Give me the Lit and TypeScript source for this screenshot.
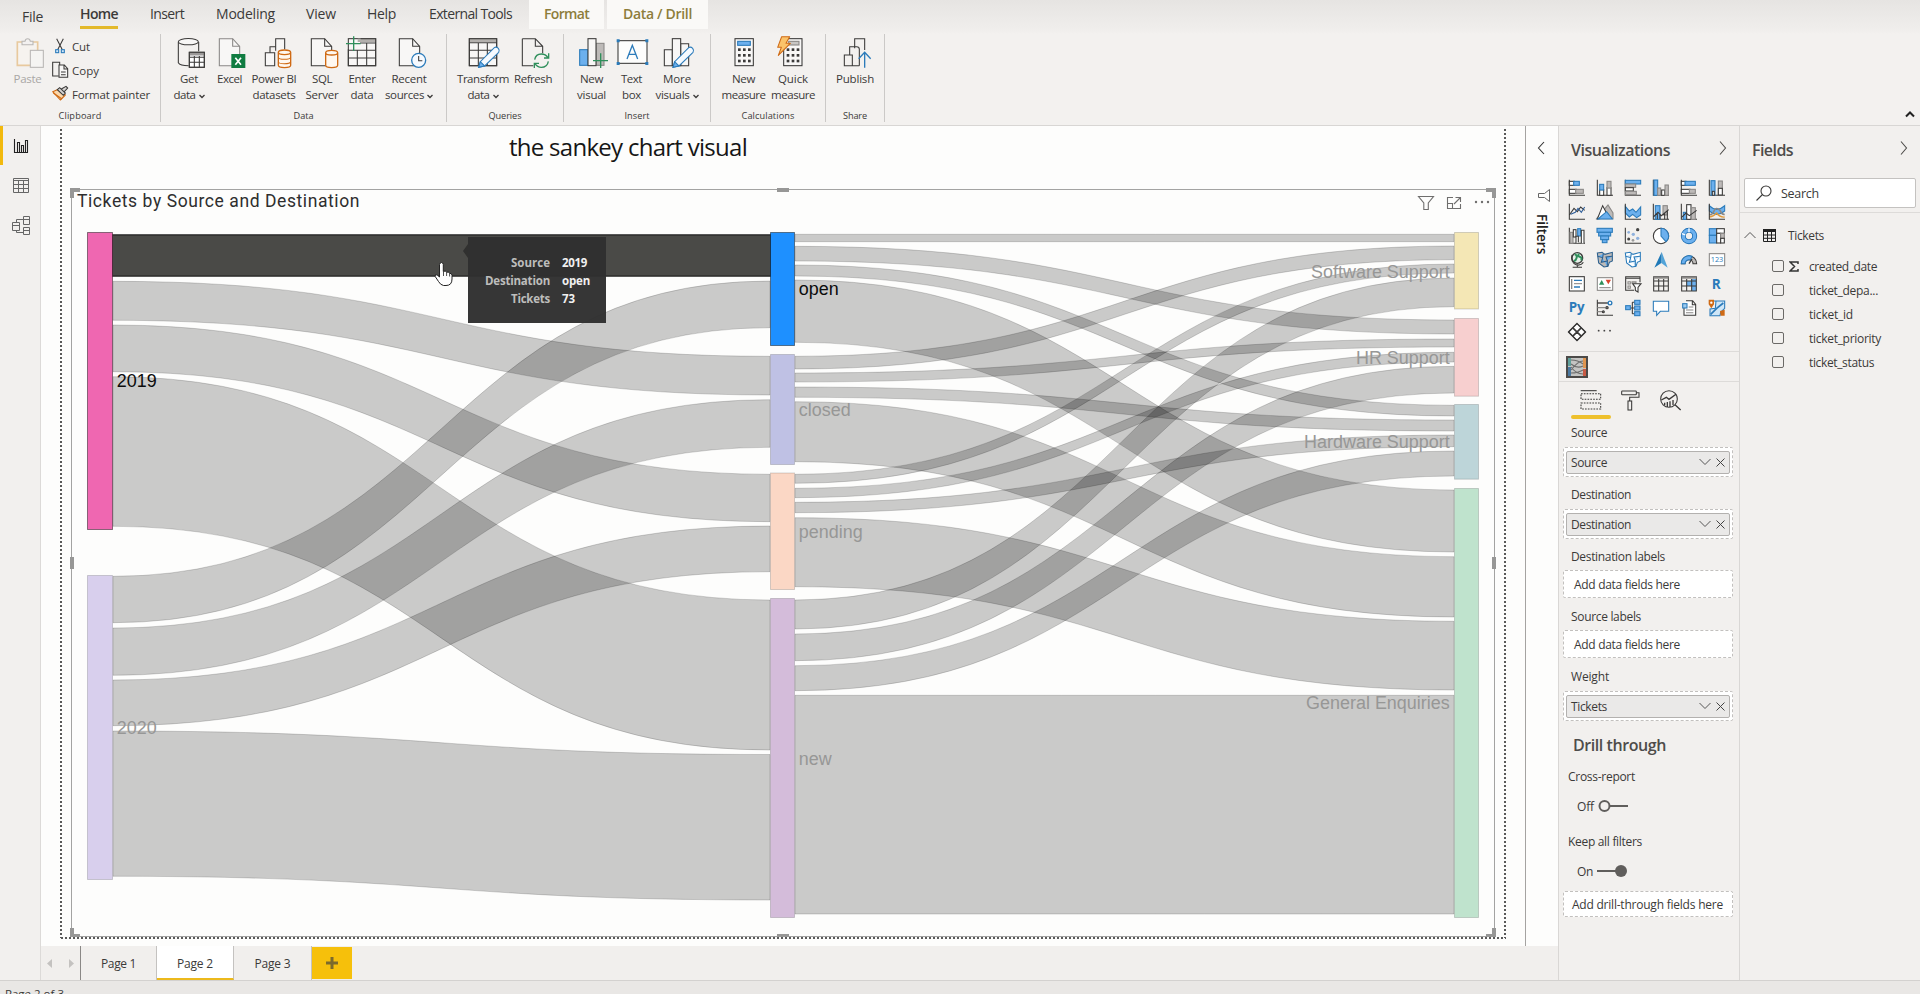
import { LitElement, html, css, svg, nothing } from "lit";
import { customElement, property, query } from "lit/decorators.js";
import { classMap } from "lit/directives/class-map.js";

const INK = "#3b3a39";
const GREY = "#8a8886";
const BLUE = "#2b7bba";
const SKY = "#6cb0ee";
const ORANGE = "#cf6a14";
const GREEN = "#2f8f5b";

/** Single line of text whose tracking is adjusted to span a given width. */
@customElement("fit-text")
class FitText extends LitElement {
  static styles = css`
    :host { display: inline-block; white-space: nowrap; }
    .t { display: inline-block; }
  `;
  @property() text = "";
  @property({ type: Number }) w = 0;
  @query(".t") span!: HTMLSpanElement;
  firstUpdated() {
    if (!this.w) return;
    const natural = this.span.getBoundingClientRect().width;
    const step = (this.w - natural) / Math.max(1, this.text.length);
    this.span.style.letterSpacing = step.toFixed(3) + "px";
  }
  render() { return html`<span class="t">${this.text}</span>`; }
}
const fit = (text: string, w: number) => html`<fit-text text=${text} w=${w}></fit-text>`;

/** Icon drawn on a grid of thirds of a pixel. */
const icon = (x: number, y: number, w: number, h: number, body: unknown) => html`<svg
  width=${w / 3} height=${h / 3} viewBox="${x} ${y} ${w} ${h}" fill="none" stroke=${INK} stroke-width="3.2" overflow="visible">${body}</svg>`;

const chevron = (dir: string, color = "#4e4c4a") => {
  const d: Record<string, string> = { r: "M4 1.500l5.500 6.500-5.500 6.500", l: "M10 2L4.500 8l5.500 6" };
  return html`<svg width="14" height="16" viewBox="0 0 14 16" fill="none" stroke=${color} stroke-width="1.1"><path d=${d[dir]} /></svg>`;
};

/* ---------- ribbon ---------- */
const pencil = (x: number, y: number) => svg`<g transform="translate(${x} ${y})">
  <path d="M1 61L6 44L48 2Q54-2 60 4Q65 10 61 16L19 57z" fill="#f5faff" stroke="${BLUE}" /><path d="M1 61L6 44L19 57z" fill="${SKY}" stroke="${BLUE}" /></g>`;
const doc = (x: number, stroke = INK) => svg`<path d="M${x} 116H${x + 40}L${x + 61} 139V197H${x}z" fill="#f8f7f6" stroke=${stroke} /><path d="M${x + 40} 116V139H${x + 61}" stroke=${stroke} />`;
const cyl = (x: number, y: number, w: number, h: number) => svg`<path d="M${x} ${y + 7}V${y + h - 7}Q${x} ${y + h} ${x + w / 2} ${y + h}T${x + w} ${y + h - 7}V${y + 7}Q${x + w} ${y} ${x + w / 2} ${y}T${x} ${y + 7}Q${x} ${y + 14} ${x + w / 2} ${y + 14}T${x + w} ${y + 7}" fill="#fff8f0" stroke="${ORANGE}" stroke-width="4" />`;
const calc = (x: number) => svg`<rect x=${x} y="116" width="55" height="81" fill="#f8f7f6" />
  ${[0, 1, 2].map(r => [0, 1, 2].map(c => svg`<rect x=${x + 9 + c * 15} y=${145 + r * 17} width="8" height="8" fill="${INK}" stroke="none" />`))}`;

const RIBBON_ICONS: Record<string, unknown> = {
  paste: icon(30, 108, 108, 96, svg`<g opacity=".55"><path d="M52 126H113V196H52z" stroke="#e0a95c" stroke-width="5" fill="#faf6ef"/><path d="M66 134V124H75Q76 116 83 116T91 124H99V134z" fill="#f3f2f1" stroke="${GREY}"/><rect x="91" y="151" width="39" height="51" fill="#f8f7f6" stroke="${GREY}"/></g>`),
  get: icon(513, 108, 108, 96, svg`<path d="M535 126V188Q540 197 566 197M596 126V154" /><ellipse cx="565" cy="125" rx="30" ry="9.500" fill="#f8f7f6" /><rect x="568" y="157" width="45" height="45" fill="#fff"/><path d="M568 162H613" stroke-width="9" stroke="#9b9998"/><path d="M568 157H613V202H568zM568 172H613M568 187H613M583 168V202M598 168V202" />`),
  excel: icon(635, 108, 108, 96, svg`${doc(657, GREY)}<rect x="693" y="162" width="42" height="42" fill="#107c41" stroke="none"/><path d="M705 173L722 194M722 173L705 194" stroke="#fff" stroke-width="5"/>`),
  pbi: icon(768, 108, 108, 96, svg`<path d="M827 152V116H854V148M796 158H824V197H796z" fill="#f8f7f6"/><path d="M810 158V140H827" />${cyl(835, 150, 37, 53)}<path d="M835 172Q836 178 853 178T872 172M835 186Q836 191 853 191T872 186" stroke="${ORANGE}" />`),
  sql: icon(912, 108, 108, 96, svg`${doc(934)}${cyl(977, 151, 36, 52)}`),
  enter: icon(1032, 108, 108, 96, svg`<rect x="1045" y="116" width="82" height="81" fill="#f8f7f6"/><path d="M1073 121H1127" stroke-width="10" stroke="#b3b0ad"/><path d="M1045 148V197H1127V116H1082M1045 151H1127M1045 174H1127M1072 150V197M1100 128V197M1080 129H1127" /><path d="M1038 131H1082M1061 109V153" stroke="${GREEN}" stroke-width="4"/>`),
  recent: icon(1173, 108, 108, 96, svg`${doc(1198)}<circle cx="1256" cy="181" r="21" fill="#f6faff" stroke="${BLUE}" stroke-width="4"/><path d="M1256 168V182H1267" />`),
  transform: icon(75, 108, 108, 96, svg`<rect x="88" y="116" width="82" height="81" fill="#f8f7f6"/><path d="M88 121H170" stroke-width="10" stroke="#b3b0ad"/><path d="M88 116H170V197H88zM88 128H170M88 151H170M88 174H170M115 128V197M142 128V197" />${pencil(115, 141)}`),
  refresh: icon(225, 108, 108, 96, svg`<path d="M247 116H286L308 139V160M247 116V197H280M286 116V139H308" /><g stroke="${GREEN}" stroke-width="4"><path d="M284 179Q287 162 304 162Q317 162 324 173M326 160V174H312M325 184Q322 202 304 202Q292 202 285 191M283 204V190H297"/></g>`),
  newvisual: icon(401, 108, 108, 96, svg`<rect x="418" y="149" width="25" height="47" fill="${SKY}" stroke="${BLUE}"/><rect x="467" y="130" width="24" height="66" fill="#bdbab8" stroke="${GREY}"/><rect x="443" y="116" width="24" height="81" fill="#f8f7f6"/><path d="M458 182H503M481 160V204" stroke="${GREEN}" stroke-width="4"/>`),
  textbox: icon(521, 108, 108, 96, svg`<rect x="533" y="122" width="87" height="68" fill="#fdfdfc"/><path d="M529 118h9v9h-9zM615 118h9v9h-9zM529 186h9v9h-9zM615 186h9v9h-9z" fill="${BLUE}" stroke="none"/><path d="M560 177L576 136L592 177M566 163H586" stroke="${BLUE}" stroke-width="4"/>`),
  more: icon(657, 108, 108, 96, svg`<path d="M673 149H697V197H673zM722 131H746V197H722z" fill="#f8f7f6"/><rect x="697" y="116" width="25" height="81" fill="#f8f7f6"/>${pencil(698, 141)}`),
  measure: icon(856, 108, 108, 96, svg`${calc(883)}<rect x="891" y="124" width="38" height="12" fill="${SKY}" stroke="${BLUE}"/>`),
  quick: icon(1004, 108, 108, 96, svg`${calc(1030)}<rect x="1045" y="124" width="31" height="11" fill="#c8c6c4" stroke="${GREY}"/><path d="M1024 110H1048L1037 130H1050L1014 166L1023 142H1012z" fill="#fbc36a" stroke="${ORANGE}" stroke-linejoin="round"/>`),
  publish: icon(1191, 108, 108, 96, svg`<path d="M1244 145V116H1274V150M1229 165V140H1250Q1258 140 1258 148V197M1213 165H1237V197H1213zM1237 197H1258"/><path d="M1274 203V157M1256 176L1274 157L1292 176" stroke="${BLUE}" stroke-width="4"/>`),
  cut: icon(156, 112, 48, 54, svg`<path d="M170 117L187 150M190 117L173 150"/><rect x="167" y="150" width="9" height="9" stroke="${BLUE}" fill="#cfe6fb"/><rect x="184" y="150" width="9" height="9" stroke="${BLUE}" fill="#cfe6fb"/>`),
  copy: icon(156, 184, 48, 54, svg`<path d="M176 229H158V188H179V196"/><path d="M177 196H193L203 207V233H177zM192 196V208H203M183 217H197M183 225H197" fill="#f8f7f6"/>`),
  painter: icon(156, 256, 48, 54, svg`<path d="M158 276L177 268L196 286L181 301z" fill="#fbd8ac" stroke="${ORANGE}" stroke-linejoin="round"/><path d="M160 280L186 298" stroke="${ORANGE}"/><path d="M172 270L179 264L196 280L190 287zM184 268L198 260L203 265L193 276" fill="#d6d4d2"/>`),
};

type Line = [string, number];
interface Btn { id: string; w: number; lines: Line[]; drop?: boolean }
interface Group { w: number; pad: number; label: Line; btns: Btn[] }
const GROUPS: Group[] = [
  { w: 286, pad: 4, label: ["Data", 20], btns: [
    { id: "get", w: 48, lines: [["Get", 18], ["data", 22]], drop: true },
    { id: "excel", w: 33, lines: [["Excel", 25]] },
    { id: "pbi", w: 56, lines: [["Power BI", 45], ["datasets", 43]] },
    { id: "sql", w: 40, lines: [["SQL", 20], ["Server", 33]] },
    { id: "enter", w: 40, lines: [["Enter", 27], ["data", 23]] },
    { id: "recent", w: 54, lines: [["Recent", 35], ["sources", 39]], drop: true }] },
  { w: 117, pad: 9, label: ["Queries", 33], btns: [
    { id: "transform", w: 54, lines: [["Transform", 52], ["data", 22]], drop: true },
    { id: "refresh", w: 46, lines: [["Refresh", 38]] }] },
  { w: 147, pad: 6, label: ["Insert", 25], btns: [
    { id: "newvisual", w: 43, lines: [["New", 23], ["visual", 29]] },
    { id: "textbox", w: 37, lines: [["Text", 21], ["box", 19]] },
    { id: "more", w: 54, lines: [["More", 28], ["visuals", 34]], drop: true }] },
  { w: 115, pad: 8, label: ["Calculations", 53], btns: [
    { id: "measure", w: 49, lines: [["New", 23], ["measure", 44]] },
    { id: "quick", w: 50, lines: [["Quick", 30], ["measure", 44]] }] },
  { w: 59, pad: 5, label: ["Share", 24], btns: [{ id: "publish", w: 48, lines: [["Publish", 38]] }] },
];

@customElement("ribbon-bar")
class RibbonBar extends LitElement {
  static styles = css`
    :host { display: block; position: relative; height: 126px; background: linear-gradient(#e6e4e2 0, #f0eeec 30px, #f3f1ef 34px); border-bottom: 1px solid #d8d6d4; box-sizing: border-box; color: #3b3a39; }
    .tabs { display: flex; height: 29px; font-size: 14px; line-height: 28px; }
    .tab { box-sizing: border-box; position: relative; }
    .tab.file { padding-top: 3px; }
    .tab.home { font-weight: 600; border-bottom: 3px solid #e3b92b; height: 29px; }
    .tab.ctx { background: #faf9f7; color: #8d7d3b; font-weight: 600; text-align: center; }
    .groups { display: flex; padding-top: 5px; height: 88px; }
    .group { box-sizing: border-box; border-right: 1px solid #cbc9c7; display: flex; flex-direction: column; }
    .row { display: flex; height: 79px; }
    .btn { display: flex; flex-direction: column; align-items: center; padding-top: 2px; box-sizing: border-box; font-size: 11.5px; line-height: 16px; }
    .btn svg { display: block; margin-bottom: 3px; flex: none; }
    .dim { color: #a9a7a5; }
    .ln { display: flex; align-items: center; height: 16px; }
    .ln svg { margin: 2px 0 0 3px; }
    .label { font-size: 9.2px; line-height: 12px; text-align: center; height: 12px; margin-top: -1px; padding-top: 2px; }
    .small { display: flex; flex-direction: column; padding-left: 2px; font-size: 11.5px; }
    .srow { display: flex; align-items: center; height: 24px; gap: 4px; }
    .fold { position: absolute; right: 5px; top: 110px; }
  `;
  tab(text: string, w: number, lead: number, cls = "") {
    return html`<div class="tab ${cls}" style="margin-left:${lead}px">${fit(text, w)}</div>`;
  }
  button(b: Btn) {
    return html`<div class="btn" style="width:${b.w}px">${RIBBON_ICONS[b.id]}
      ${b.lines.map((l, i) => html`<div class="ln">${fit(l[0], l[1])}${b.drop && i ? html`<svg width="6" height="5" viewBox="0 0 6 5" fill="none" stroke="#3b3a39" stroke-width="1.300"><path d="M.5 1L3 3.500L5.500 1"/></svg>` : nothing}</div>`)}</div>`;
  }
  render() {
    return html`
      <div class="tabs">
        ${this.tab("File", 21, 22, "file")}${this.tab("Home", 38, 37, "home")}${this.tab("Insert", 34, 32)}
        ${this.tab("Modeling", 59, 32)}${this.tab("View", 30, 31)}${this.tab("Help", 29, 31)}${this.tab("External Tools", 83, 33)}
        <div class="tab ctx" style="width:75px;margin-left:17px">${fit("Format", 45)}</div>
        <div class="tab ctx" style="width:101px;margin-left:3px">${fit("Data / Drill", 69)}</div>
      </div>
      <div class="groups">
        <div class="group" style="width:161px">
          <div class="row">
            <div class="btn dim" style="width:45px;margin-left:5px">${RIBBON_ICONS.paste}<div class="ln">${fit("Paste", 28)}</div></div>
            <div class="small">
              <div class="srow">${RIBBON_ICONS.cut}${fit("Cut", 18)}</div>
              <div class="srow">${RIBBON_ICONS.copy}${fit("Copy", 27)}</div>
              <div class="srow">${RIBBON_ICONS.painter}${fit("Format painter", 78)}</div>
            </div>
          </div>
          <div class="label">${fit("Clipboard", 43)}</div>
        </div>
        ${GROUPS.map(g => html`<div class="group" style="width:${g.w}px">
          <div class="row" style="padding-left:${g.pad}px">${g.btns.map(b => this.button(b))}</div>
          <div class="label">${fit(...g.label)}</div></div>`)}
      </div>
      <svg class="fold" width="10" height="8" viewBox="0 0 10 8" fill="none" stroke="#222" stroke-width="2"><path d="M1 6.500L5 2.500L9 6.500"/></svg>`;
  }
}

/* ---------- sankey ---------- */
interface Node { name: string; x: number; w: number; y0: number; y1: number; fill: string; ly: number; on?: boolean; end?: boolean }
const NODES: Node[] = [
  { name: "2019", x: 87, w: 26, y0: 232, y1: 530, fill: "#ef67b1", ly: 387, on: true },
  { name: "2020", x: 87, w: 26, y0: 575, y1: 880, fill: "#d8cfed", ly: 733.5 },
  { name: "open", x: 770, w: 25, y0: 232, y1: 346, fill: "#1e90ff", ly: 295, on: true },
  { name: "closed", x: 770, w: 25, y0: 354, y1: 465, fill: "#bfc1e4", ly: 416 },
  { name: "pending", x: 770, w: 25, y0: 472.5, y1: 590, fill: "#fbd7c5", ly: 538 },
  { name: "new", x: 770, w: 25, y0: 598, y1: 918, fill: "#d4bcda", ly: 764.7 },
  { name: "Software Support", x: 1454, w: 25, y0: 232, y1: 309.5, fill: "#f4e7b5", ly: 278, end: true },
  { name: "HR Support", x: 1454, w: 25, y0: 318, y1: 396.7, fill: "#f7cfcf", ly: 363.7, end: true },
  { name: "Hardware Support", x: 1454, w: 25, y0: 404, y1: 479.7, fill: "#bdd5d9", ly: 447.7, end: true },
  { name: "General Enquiries", x: 1454, w: 25, y0: 488, y1: 918, fill: "#bfe3cd", ly: 709, end: true },
];
/* top and bottom at the source, then top and bottom at the destination */
const LEFT_LINKS = [
  [281.3, 320.3, 356.3, 395], [325, 371.7, 474.3, 521.7], [376.7, 526.3, 600, 750],
  [576.3, 622.7, 281, 327.7], [628, 675.3, 399.7, 447.3], [680, 725.7, 526, 571.7], [731, 876.3, 754.5, 900],
];
const RIGHT_LINKS = [
  [234.3, 241.7, 234.3, 241.7], [246.3, 261, 320, 334], [265, 276, 405.3, 416], [280, 342.3, 490, 552],
  [356.3, 369, 246, 259.7], [373, 382, 339, 347], [387, 397.3, 420, 431], [401.7, 461.7, 556.7, 617],
  [474.3, 483.3, 264, 273], [488.3, 497.7, 352.3, 362], [502.3, 512.7, 435, 446.7], [517.7, 586.7, 621.3, 690],
  [600, 629, 278, 306.7], [634, 660.7, 366.3, 393], [665.7, 690.7, 451, 476], [695.3, 914, 695.3, 914],
];
const ribbonPath = (x0: number, x1: number, [a, b, c, d]: number[]) => {
  const m = (x0 + x1) / 2;
  return `M${x0} ${a}C${m} ${a} ${m} ${c} ${x1} ${c}V${d}C${m} ${d} ${m} ${b} ${x0} ${b}z`;
};

@customElement("report-canvas")
class ReportCanvas extends LitElement {
  static styles = css`
    :host { display: block; position: relative; background: #fdfdfc; overflow: hidden; }
    .plot { position: absolute; inset: 0; }
    .heading { padding: 7px 0 0 468px; font-size: 24px; line-height: 28px; color: #161616; font-weight: 400; }
    .title { padding: 28px 0 0 36px; font-family: Roboto, sans-serif; font-size: 17.5px; line-height: 24px; color: #2e2e2e; }
    .link { fill: #000; fill-opacity: .2; stroke: #000; stroke-opacity: .16; stroke-width: 1; }
    .hot { fill: #4a4a47; stroke: #2f2f2e; stroke-width: 1.6; }
    .name { font: 17.95px "Liberation Sans", Arial, sans-serif; fill: #979796; }
    .name.on { fill: #0c0c0c; }
    .end { text-anchor: end; }
    .tip { position: absolute; left: 427px; top: 111px; width: 138px; height: 86px; box-sizing: border-box; background: rgba(48, 48, 47, .97); display: grid; grid-template-columns: 82px 1fr; column-gap: 12px; grid-auto-rows: 18px; padding-top: 17px; line-height: 18px; font-size: 11.5px; font-weight: 700; color: #f0f0f0; }
    .k { text-align: right; color: #bdbdbc; }
    .arrow { position: absolute; left: -5px; top: 7px; border: solid transparent; border-width: 7px 5px 7px 0; border-right-color: #30302f; }
  `;
  node(n: Node) {
    return svg`<rect x=${n.x + .5} y=${n.y0 + .5} width=${n.w - 1} height=${n.y1 - n.y0 - 1} fill=${n.fill} stroke="#000" stroke-opacity=${n.on ? .45 : .16} />`;
  }
  render() {
    return html`
      <svg class="plot" width="1484" height="820" viewBox="41 126 1484 820">
        <g stroke="#595959" stroke-width="2" stroke-dasharray="2 2" fill="none"><path d="M61 129V938M61 938H1506M1505 129V938"/></g>
        <rect x="71.500" y="189.500" width="1423" height="747" fill="none" stroke="#a3a3a2"/>
        <g fill="#979796"><path d="M70 188h10v4h-6v6h-4zM1486 188h10v10h-4v-6h-6zM70 928h4v6h6v3h-10zM1492 928h4v9h-10v-3h6z"/>
          <path d="M777 188h12v4h-12zM777 934h12v3h-12zM70 557h4v12h-4zM1492 557h4v12h-4z"/></g>
        ${LEFT_LINKS.map(l => svg`<path class="link" d=${ribbonPath(113, 770, l)} />`)}
        ${RIGHT_LINKS.map(l => svg`<path class="link" d=${ribbonPath(795, 1454, l)} />`)}
        <rect class="hot" x="112" y="235" width="659" height="41"/>
        ${NODES.map(n => this.node(n))}
        ${NODES.map(n => svg`<text class=${classMap({ name: true, on: !!n.on, end: !!n.end })} x=${n.end ? 1449.7 : n.x + n.w + 3.8} y=${n.ly}>${n.name}</text>`)}
        <g fill="none" stroke="#6f6e6d" stroke-width="1.100">
          <path d="M1418.500 196.500H1433.500L1428.300 203V209.500H1423.800V203z"/>
          <path d="M1453 197.500H1447.500V208.500H1460.500V204M1447.500 203.500H1452.500V208.500M1455.500 197.500H1460.500V202M1460.500 197.500L1454 204"/></g>
        <g fill="#6f6e6d"><circle cx="1476" cy="202" r="1.200"/><circle cx="1482" cy="202" r="1.200"/><circle cx="1488" cy="202" r="1.200"/></g>
        <path d="M439.500 264.500Q440 262.500 441.500 262.500T443.300 264.500V271.500Q445.500 270.200 446.600 272.300Q449 271.300 449.600 273.400Q452 272.800 452 275.500V279Q452 285.500 446 285.500H443.500Q440.500 285 438.500 281.500L435.200 276.500Q434.600 274.300 437 274.800L439.500 277z" fill="#fff" stroke="#222" stroke-width="1"/>
        <path d="M443.500 272v4M446.600 272.500v3.500M449.600 273.500v3" stroke="#222" stroke-width=".8"/>
      </svg>
      <div class="heading">${fit("the sankey chart visual", 238)}</div>
      <div class="title">${fit("Tickets by Source and Destination", 283)}</div>
      <div class="tip"><div class="arrow"></div>
        <div class="k">${fit("Source", 39)}</div><div>${fit("2019", 25)}</div>
        <div class="k">${fit("Destination", 65)}</div><div>${fit("open", 28)}</div>
        <div class="k">${fit("Tickets", 39)}</div><div>${fit("73", 13)}</div>
      </div>`;
  }
}

/* ---------- visualizations pane ---------- */
const ax = svg`<path d="M4 2V49H51" />`;
const bar = (x: number, y: number, w: number, h: number, f = SKY, s = BLUE) => svg`<rect x=${x} y=${y} width=${w} height=${h} fill=${f} stroke=${s} />`;
const G = "#bdbab8";
const grid = svg`<path d="M5 5H49V48H5zM5 18H49M5 33H49M20 12V48M35 12V48" /><path d="M5 8H49" stroke-width="6" stroke="${GREY}"/>`;
const map = (f1: string, f2: string, s: string) => svg`<path d="M4 6L18 4L27 10L49 4V30L40 34L36 46L24 48L8 36z" fill=${f1} stroke=${s}/><path d="M5 16L20 20L22 8M20 20L16 34L34 30V48M34 30L30 18L48 16" fill=${f2} stroke=${s}/>`;
const VISUALS = [
  svg`${ax}${bar(4, 7, 15, 12, "#fff", INK)}${bar(17, 7, 17, 12)}${bar(4, 31, 21, 12, "#fff", INK)}${bar(23, 31, 23, 12, G, GREY)}`,
  svg`${ax}${bar(11, 32, 12, 17, "#fff", INK)}${bar(11, 16, 12, 17)}${bar(33, 26, 12, 23, "#fff", INK)}${bar(33, 7, 12, 20, G, GREY)}`,
  svg`${ax}${bar(4, 4, 46, 11)}${bar(4, 15, 31, 10, G, GREY)}${bar(4, 26, 24, 10, "#fff", INK)}${bar(4, 37, 33, 10, G, GREY)}`,
  svg`${ax}${bar(6, 3, 11, 46)}${bar(17, 27, 9, 22, G, GREY)}${bar(29, 33, 9, 16, "#fff", INK)}${bar(39, 18, 10, 31, G, GREY)}`,
  svg`${ax}${bar(4, 7, 14, 12, "#fff", INK)}${bar(15, 7, 31, 12)}${bar(4, 31, 26, 12, "#fff", INK)}${bar(28, 31, 18, 12, G, GREY)}`,
  svg`${ax}${bar(9, 5, 12, 44)}${bar(13, 37, 6, 12, "#fff", INK)}${bar(31, 6, 12, 42, G, GREY)}${bar(31, 28, 12, 20, "#fff", INK)}`,
  svg`${ax}<path d="M4 36L18 16L28 26L38 12L50 22" /><path d="M8 34L22 28L30 16L40 28L50 12" stroke="#2f5f9a"/>`,
  svg`<path d="M2 47L36 6L51 30V47z" fill="${G}" stroke="${GREY}"/><path d="M4 48L20 8L38 42z" fill="#fff"/><path d="M6 48L22 34L32 26L49 48z" fill="${SKY}" stroke="${BLUE}"/>`,
  svg`<path d="M4 10L16 24L26 18L36 28L50 12V36L38 44L26 34L16 42L4 30z" fill="${SKY}" stroke="${BLUE}"/>${ax}`,
  svg`${ax}${bar(10, 8, 14, 41)}${bar(33, 8, 13, 28, G, GREY)}<path d="M4 42L18 28L28 38L50 20M16 30V49M24 36V49M38 30V49M46 24V49"/>`,
  svg`${ax}${bar(10, 28, 10, 21)}${bar(20, 5, 13, 44, "#fff", INK)}${bar(34, 14, 12, 35, G, GREY)}<path d="M4 44L18 30L28 38L50 22"/>`,
  svg`<path d="M4 8Q26 30 50 8V24Q26 44 4 24z" fill="${SKY}" stroke="${BLUE}"/><path d="M4 34Q12 38 18 24T36 22Q42 36 50 34" stroke="${GREY}" stroke-width="5"/><path d="M4 42Q18 40 26 30Q36 44 50 42" stroke="#e09a3c" stroke-width="4"/>${ax}`,
  svg`${ax}${bar(6, 16, 9, 33, G, GREY)}${bar(16, 8, 8, 22, "#fff", INK)}${bar(29, 5, 9, 22)}<path d="M24 49V28H31V46M40 49V10H48V49" fill="#fff"/>`,
  svg`${bar(3, 4, 46, 12)}${bar(8, 16, 36, 11)}${bar(14, 27, 24, 11)}${bar(19, 38, 14, 9)}`,
  svg`${ax}<g stroke="none" fill="#444"><circle cx="41" cy="8" r="5"/><circle cx="14" cy="36" r="4.500"/></g><g stroke="none" fill="#8fb1dd"><circle cx="14" cy="16" r="4"/><circle cx="28" cy="22" r="5"/><circle cx="41" cy="34" r="5"/></g><circle cx="27" cy="40" r="4" fill="#999" stroke="none"/>`,
  svg`<circle cx="27" cy="27" r="23" fill="#fff"/><path d="M27 4A23 23 0 0 1 42 44L27 27z" fill="${SKY}" stroke="${BLUE}"/>`,
  svg`<circle cx="27" cy="27" r="17" stroke="#1d6fb5" stroke-width="15"/><circle cx="27" cy="27" r="17" stroke="${SKY}" stroke-width="10"/><path d="M27 4V16M6 20L16 24" stroke="#fff" stroke-width="4"/>`,
  svg`${bar(4, 5, 22, 20)}${bar(4, 25, 22, 23)}${bar(26, 5, 23, 14, "#fff", INK)}${bar(26, 19, 12, 29, "#fff", INK)}${bar(38, 19, 11, 15, G, GREY)}${bar(38, 34, 11, 14, "#fff", INK)}`,
  svg`<circle cx="28" cy="21" r="16" fill="#e9f1ea" stroke-width="4"/><path d="M20 10Q28 12 26 20T18 30M32 8Q30 18 36 18T40 28" stroke="${GREEN}" stroke-width="6"/><path d="M12 12Q6 34 26 42Q40 44 46 34M28 40V49M14 49H42"/>`,
  map(G, SKY, "#2c5f8d"),
  map("#fff", "#d4e9fb", BLUE),
  svg`<path d="M29 3L47 50L28 36z" fill="#52a3d8" stroke="none"/><path d="M29 3L7 50L28 36z" fill="#1f79b8" stroke="none"/>`,
  svg`<path d="M4 38A23 23 0 0 1 50 38H39A12 12 0 0 0 15 38z" fill="${G}" /><path d="M4 38A23 23 0 0 1 36 16L31 27A12 12 0 0 0 15 38z" fill="${SKY}" stroke="${BLUE}"/><path d="M27 38L36 24" stroke-width="4"/>`,
  svg`<rect x="4" y="8" width="46" height="36" fill="#fff" stroke="${GREY}"/><text x="27" y="33" font-size="22" text-anchor="middle" fill="${BLUE}" stroke="none" font-family="Open Sans">123</text>`,
  svg`<rect x="4" y="5" width="45" height="43" fill="#fff"/><path d="M11 12V42" stroke="${GREY}" stroke-width="4"/><path d="M18 16H42M18 36H36" stroke="${BLUE}" stroke-width="4"/><path d="M18 26H42" stroke="${GREY}"/>`,
  svg`<rect x="4" y="8" width="46" height="38" fill="#fff" stroke="${GREY}"/><path d="M9 29L17 15L25 29z" fill="${GREEN}" stroke="none"/><path d="M29 14H45L37 28z" fill="#d9452b" stroke="none"/><path d="M10 38H44" stroke="${GREY}"/>`,
  svg`<path d="M30 46H5V5H48V22M5 10H48" /><path d="M12 20h7v7h-7zM12 33h7v7h-7zM24 20h12v4h-12z" stroke="${GREY}"/><path d="M26 26H51L42 37V51L34 46V37z" fill="#fff"/>`,
  grid,
  svg`<path d="M20 18H35V33H20z M35 33H49V48H35zM35 12H49V33H35z" fill="${SKY}" stroke="none"/>${grid}`,
  svg`<text x="11" y="42" font-size="44" font-weight="700" fill="${BLUE}" stroke="none" font-family="Open Sans" textLength="27" lengthAdjust="spacingAndGlyphs">R</text>`,
  svg`<text x="2" y="40" font-size="40" font-weight="700" fill="${BLUE}" stroke="none" font-family="Open Sans" textLength="48" lengthAdjust="spacingAndGlyphs">Py</text>`,
  svg`${ax}<path d="M4 12H36" stroke-width="4"/><circle cx="42" cy="12" r="5.500" stroke="${BLUE}" stroke-width="4" fill="#fff"/><path d="M4 26H28M4 38H18" stroke="${GREY}" stroke-width="4"/><circle cx="33" cy="26" r="3.500" fill="${GREY}"/><circle cx="22" cy="38" r="3" fill="${GREY}"/>`,
  svg`<path d="M18 27H32M25 10V44M25 10H32M25 44H32" />${bar(5, 20, 14, 12)}${bar(32, 4, 16, 12)}${bar(32, 21, 16, 12)}${bar(32, 38, 16, 12)}`,
  svg`<path d="M4 7H50V37H25L14 49V37H4z" fill="#fff" stroke="${BLUE}"/>`,
  svg`<path d="M18 5H38L47 16V49H12V22M37 5V17H47" fill="#fff"/><rect x="8" y="14" width="13" height="13" fill="#9dcbf0" stroke="${BLUE}"/><path d="M18 33H40M18 41H40M26 24H40" stroke="${GREY}"/>`,
  svg`<path d="M14 6H50V28L38 40L36 50H6V30L22 28L24 6" fill="#cfe6f7" stroke="${BLUE}"/><path d="M8 46L26 28L46 12" stroke="${BLUE}" stroke-width="5"/><path d="M2 2H18V16L10 28L2 16zM36 36l14-4v18h-12z" fill="${ORANGE}" stroke="none"/><circle cx="10" cy="11" r="3.500" fill="#fff" stroke="none"/>`,
  svg`<path d="M27 1L53 27L27 53L1 27z" fill="#fff"/><g stroke-width="3.600"><path d="M27 2L15 14L27 26L39 14zM14 15L2 27L14 39L26 27zM40 15L28 27L40 39L52 27zM27 28L15 40L27 52L39 40z" stroke-linejoin="round"/></g>`,
  svg`<g stroke="none" fill="#444"><circle cx="8" cy="23" r="2.800"/><circle cx="25" cy="23" r="2.800"/><circle cx="42" cy="23" r="2.800"/></g>`,
];

@customElement("viz-pane")
class VizPane extends LitElement {
  static styles = css`
    :host { display: flex; flex-direction: column; box-sizing: border-box; width: 182px; border-left: 1px solid #d9d7d5; border-right: 1px solid #d9d7d5; background: #f2f0ee; color: #3b3a39; font-size: 12px; }
    .head { display: flex; justify-content: space-between; align-items: center; height: 48px; padding: 0 9px 0 12px; font-size: 16px; font-weight: 600; color: #4e4c4a; }
    .head svg { margin-top: -5px; }
    .gallery { display: grid; grid-template-columns: repeat(6, 18px); gap: 6px 10px; padding: 5px 0 0 9px; height: 177px; box-sizing: border-box; grid-auto-rows: 18px; }
    .custom { border: solid #dddbd9; border-width: 1px 0; height: 29px; padding: 4px 0 0 7px; box-sizing: border-box; height: 31px; }
    .custom svg { display: block; }
    .tabs { display: flex; gap: 20px; height: 33px; padding: 8px 0 0 21px; box-sizing: border-box; }
    .mark { width: 40px; height: 4px; border-radius: 2px; background: #eec02c; margin: 0 0 5px 12px; }
    .lbl { padding-left: 12px; height: 18px; line-height: 18px; }
    .well { box-sizing: border-box; margin: 5px 6px 9px 4px; width: 170px; border: 1px dashed #c2c0be; background: #fff; height: 30px; padding: 3px 2px; border-radius: 2px; }
    .well.empty { height: 28px; padding: 0 0 0 10px; line-height: 27px; margin-top: 4px; margin-bottom: 10px; }
    .chip { display: flex; align-items: center; box-sizing: border-box; height: 23px; margin-top: -.5px; border: 1px solid #b3b1af; background: #eae9e8; border-radius: 2px; padding: 0 4px 0 4px; }
    .chip fit-text { flex: 1; }
    .chip svg + svg { margin-left: 5px; }
    h2 { font-size: 16px; font-weight: 600; color: #4e4c4a; margin: 3px 0 0 14px; height: 24px; line-height: 24px; }
    .sub { padding-left: 9px; height: 18px; line-height: 18px; margin-top: 11px; }
    .toggle { display: flex; align-items: center; padding-left: 18px; height: 20px; margin-top: 10px; }
    .off { gap: 4px; margin-bottom: 6px; }
    .on { gap: 4px; margin-bottom: 16px; }
    .well.drill { height: 26px; line-height: 25px; padding-left: 8px; margin-top: -6px; }
  `;
  filled(label: string, lw: number, value: string, vw: number) {
    return html`<div class="lbl">${fit(label, lw)}</div><div class="well"><div class="chip">${fit(value, vw)}
      <svg width="12" height="8" viewBox="0 0 12 8" fill="none" stroke="#555" stroke-width="1"><path d="M.5 1L6 6.500L11.500 1"/></svg>
      <svg width="9" height="9" viewBox="0 0 9 9" fill="none" stroke="#444" stroke-width="1"><path d="M.5 .5l8 8M8.500 .5l-8 8"/></svg></div></div>`;
  }
  empty(label: string, lw: number) {
    return html`<div class="lbl">${fit(label, lw)}</div><div class="well empty">${fit("Add data fields here", 106)}</div>`;
  }
  render() {
    return html`
      <div class="head">${fit("Visualizations", 99)}${chevron("r")}</div>
      <div class="gallery">${VISUALS.map(v => icon(0, 0, 54, 54, v))}</div>
      <div class="custom"><svg width="22" height="22" viewBox="0 0 22 22"><rect x="1" y="1" width="20" height="20" fill="#c4c4c2" stroke="#4c4a48" stroke-width="2"/><path d="M2 2h3v8H2z" fill="#5f9f9a"/><path d="M2 11h3v9H2z" fill="#4a78a0"/><path d="M17 2h3v10h-3z" fill="#e0954f"/><path d="M17 13h3v7h-3z" fill="#c95a44"/><path d="M5 4Q12 4 17 8M5 8Q11 13 17 10M5 14Q12 5 17 5M5 17Q12 17 17 14M5 11Q10 18 17 18" fill="none" stroke="#6d6d6c" stroke-width="1.100"/></svg></div>
      <div class="tabs">
        ${icon(91, 62, 63, 63, svg`<path d="M93 64H141"/><g stroke-dasharray="5 3.500"><path d="M94 73H153V90H94zM94 101H153V119H94z"/></g>`)}
        ${icon(215, 62, 57, 63, svg`<rect x="217" y="65" width="44" height="11" rx="2"/><path d="M261 70H269V84H241V95"/><rect x="236" y="95" width="11" height="27"/>`)}
        ${icon(331, 62, 63, 63, svg`<circle cx="358" cy="89" r="25"/><path d="M376 106L393 122M335 92L350 84L358 90L380 74M345 100V108M353 98V113M361 96V113M370 92V107" stroke-width="4"/>`)}
      </div>
      <div class="mark"></div>
      ${this.filled("Source", 36, "Source", 36)}
      ${this.filled("Destination", 60, "Destination", 60)}
      ${this.empty("Destination labels", 94)}
      ${this.empty("Source labels", 70)}
      ${this.filled("Weight", 38, "Tickets", 36)}
      <h2>${fit("Drill through", 93)}</h2>
      <div class="sub">${fit("Cross-report", 67)}</div>
      <div class="toggle off">${fit("Off", 17)}<svg width="31" height="14" viewBox="0 0 31 14" fill="none" stroke="#605e5c" stroke-width="2"><circle cx="6.500" cy="7" r="5"/><path d="M12 7H30"/></svg></div>
      <div class="sub">${fit("Keep all filters", 74)}</div>
      <div class="toggle on">${fit("On", 16)}<svg width="31" height="14" viewBox="0 0 31 14"><path d="M0 7H20" stroke="#605e5c" stroke-width="2"/><circle cx="24" cy="7" r="6" fill="#605e5c"/></svg></div>
      <div class="well empty drill">${fit("Add drill-through fields here", 151)}</div>`;
  }
}

/* ---------- fields pane ---------- */
@customElement("fields-pane")
class FieldsPane extends LitElement {
  static styles = css`
    :host { display: block; flex: 1; background: #f2f0ee; color: #3b3a39; font-size: 12px; }
    .head { display: flex; justify-content: space-between; align-items: center; height: 48px; padding: 0 9px 0 12px; font-size: 16px; font-weight: 600; color: #4e4c4a; }
    .head svg { margin-top: -5px; }
    .search { box-sizing: border-box; margin: 4px 4px 4px 4px; height: 30px; border: 1px solid #c4c2c0; border-radius: 2px; background: #fff; display: flex; align-items: center; gap: 9px; padding-left: 11px; font-size: 12.5px; }
    .tree { border-top: 1px solid #dddbd9; padding-top: 10px; }
    .table { display: flex; align-items: center; height: 24px; padding-left: 4px; }
    .table svg:nth-of-type(1) { margin-right: 7px; }
    .table fit-text { margin-left: 12px; }
    .field { display: flex; align-items: center; height: 24px; padding-left: 32px; }
    .first { margin-top: 7px; }
    .box { width: 12px; height: 12px; box-sizing: border-box; border: 1px solid #6b6967; border-radius: 2px; margin-top: -1px; }
    .sum { width: 25px; padding-left: 5px; box-sizing: border-box; display: flex; }
  `;
  render() {
    const fields: Line[] = [["created_date", 68], ["ticket_depa...", 69], ["ticket_id", 44], ["ticket_priority", 72], ["ticket_status", 65]];
    return html`
      <div class="head">${fit("Fields", 41)}${chevron("r")}</div>
      <div class="search"><svg width="16" height="16" viewBox="0 0 16 16" fill="none" stroke="#3b3a39" stroke-width="1.100"><circle cx="10" cy="6" r="5"/><path d="M6.500 9.500L.5 15.500"/></svg>${fit("Search", 38)}</div>
      <div class="tree">
        <div class="table"><svg width="12" height="8" viewBox="0 0 12 8" fill="none" stroke="#555"><path d="M.5 7L6 1.500L11.500 7"/></svg>
          <svg width="13" height="13" viewBox="0 0 13 13" fill="none" stroke="#222" stroke-width="1"><path d="M0 1.500H13" stroke-width="3"/><path d="M.5 .5H12.500V12.500H.5zM.5 6H12.500M.5 9.300H12.500M4.500 2V12.500M8.500 2V12.500"/></svg>${fit("Tickets", 36)}</div>
        ${fields.map(([t, w], i) => html`<div class="field ${i ? "" : "first"}"><div class="box"></div><div class="sum">${i ? nothing : html`<svg width="10" height="11" viewBox="0 0 10 11" fill="none" stroke="#333" stroke-width="1.500"><path d="M9 3V1H1L5.500 5.500L1 10H9V8"/></svg>`}</div>${fit(t, w)}</div>`)}
      </div>`;
  }
}

@customElement("app-root")
class AppRoot extends LitElement {
  static styles = css`
    :host { display: flex; flex-direction: column; width: 1920px; height: 994px; overflow: hidden; background: #f2f0ee; font-family: "Open Sans", "Noto Sans", sans-serif; color: #3b3a39; }
    .main { display: flex; height: 854px; }
    .nav { width: 40px; box-sizing: content-box; border-right: 1px solid #dcdad8; display: flex; flex-direction: column; }
    .item { box-sizing: border-box; height: 39px; margin-bottom: 1px; display: flex; align-items: center; padding-left: 12px; }
    .item.on { border-left: 3px solid #f2b90d; padding-left: 10px; }
    .center { display: flex; flex-direction: column; width: 1517px; }
    .upper { display: flex; height: 820px; }
    report-canvas { width: 1484px; height: 820px; }
    .filters { box-sizing: border-box; width: 33px; border-left: 1px solid #a5a3a1; background: #fdfdfc; display: flex; flex-direction: column; align-items: center; }
    .filters > svg { margin: 14px 0 0 -2px; }
    .filters > svg + svg { margin: 33px 0 0 4px; }
    .vert { writing-mode: vertical-rl; font-size: 13.5px; font-weight: 600; color: #222; margin-top: 12px; line-height: 20px; }
    .pages { display: flex; height: 34px; background: #f1efed; font-size: 12px; line-height: 35px; }
    .arrows { width: 40px; box-sizing: border-box; border-right: 1px solid #8a8886; display: flex; align-items: center; gap: 17px; padding-left: 6px; }
    .pg { width: 76px; box-sizing: border-box; text-align: center; border-right: 1px solid #c4c2c0; }
    .pg.on { background: #fff; border-bottom: 2px solid #ecb91c; width: 77px; }
    .pg.last { width: 78px; }
    .add { width: 40px; height: 32px; margin-top: 1px; background: #f6c00b; display: flex; align-items: center; justify-content: center; }
    .status { height: 14px; box-sizing: border-box; border-top: 1px solid #d3d1cf; background: #e9e7e5; padding-left: 5px; font-size: 11.5px; line-height: 16px; padding-top: 5px; overflow: hidden; }
  `;
  render() {
    return html`
      <ribbon-bar></ribbon-bar>
      <div class="main">
        <div class="nav">
          <div class="item on"><svg width="16" height="16" viewBox="0 0 16 16" fill="none" stroke="#222" stroke-width="1.100"><path d="M1.500 1V14.500H15M4.500 14.500V4.500H6.500V14.500M8.500 14.500V7.500H10.500V14.500M12.500 14.500V2.500H14.500V14.500"/></svg></div>
          <div class="item"><svg width="18" height="16" viewBox="0 0 18 16" fill="none" stroke="#666"><path d="M1.500 .5H16.500V14.500H1.500zM1.500 2.500H16.500M1.500 6.500H16.500M1.500 10.500H16.500M6.500 2.500V14.500M11.500 2.500V14.500"/></svg></div>
          <div class="item"><svg width="19" height="19" viewBox="0 0 19 19" fill="none" stroke="#666"><path d="M.5 6.500H7.500V14.500H.5zM.5 9.500H7.500M11.500 .5H17.500V8.500H11.500zM11.500 3.500H17.500M11.500 11.500H17.500V18.500H11.500zM11.500 14.500H17.500M4.500 6.500V3.500H11.500M4.500 14.500V16.500H11.500"/></svg></div>
        </div>
        <div class="center">
          <div class="upper">
            <report-canvas></report-canvas>
            <div class="filters">${chevron("l", "#333")}
              <svg width="13" height="13" viewBox="0 0 13 13" fill="none" stroke="#666" stroke-width="1"><path d="M11.500 .5V12.500L6.500 8.500H.5V4.500H6.500z"/></svg>
              <div class="vert">${fit("Filters", 0)}</div></div>
          </div>
          <div class="pages">
            <div class="arrows"><svg width="5" height="9" viewBox="0 0 5 9" fill="#c4c2c0"><path d="M5 0V9L0 4.500z"/></svg><svg width="5" height="9" viewBox="0 0 5 9" fill="#c4c2c0"><path d="M0 0V9L5 4.500z"/></svg></div>
            <div class="pg">${fit("Page 1", 35)}</div><div class="pg on">${fit("Page 2", 36)}</div><div class="pg last">${fit("Page 3", 36)}</div>
            <div class="add"><svg width="12" height="12" viewBox="0 0 12 12" stroke="#7b6a2c" stroke-width="3"><path d="M6 0V12M0 6H12"/></svg></div>
          </div>
        </div>
        <viz-pane></viz-pane>
        <fields-pane></fields-pane>
      </div>
      <div class="status">${fit("Page 2 of 3", 59)}</div>`;
  }
}
